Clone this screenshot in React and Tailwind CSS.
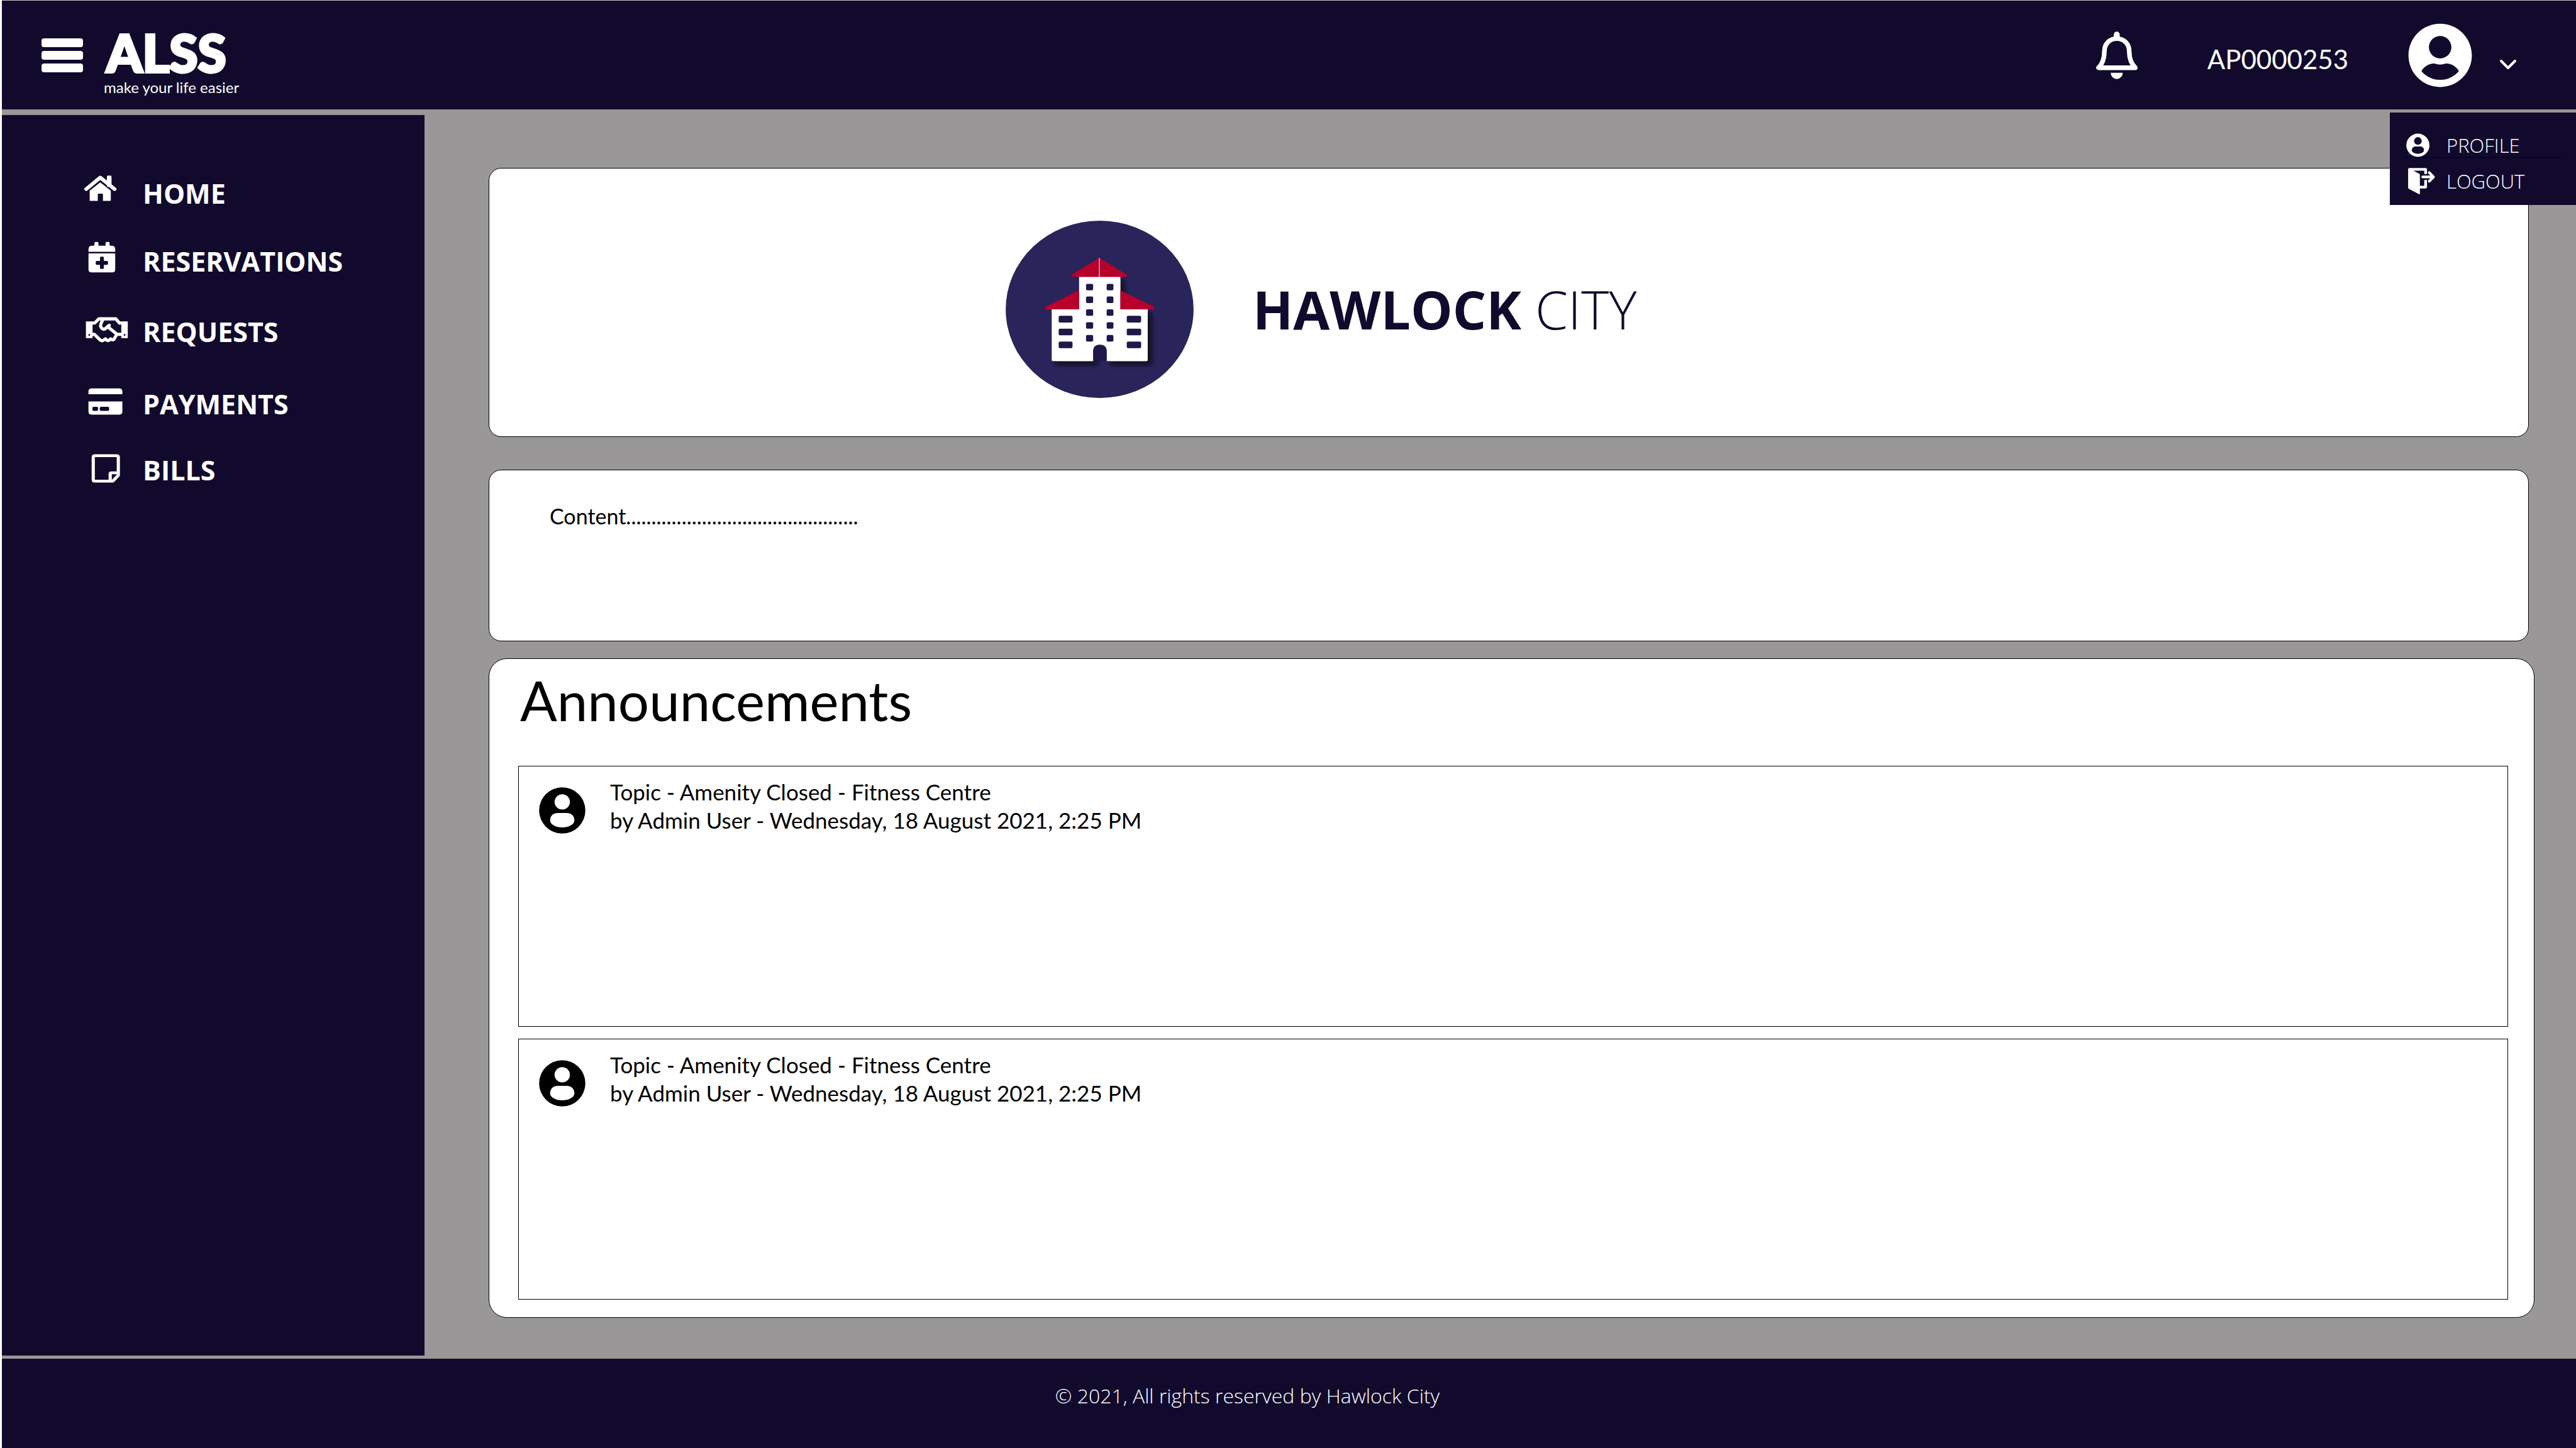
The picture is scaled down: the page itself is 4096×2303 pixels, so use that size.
import React from "react";
import { FaUserCircle } from "react-icons/fa";

const NAVY = "#110a2d";

function HomeIcon() {
  return (
    <svg className="h-16 w-[93px] shrink-0" viewBox="160 84 238 184" preserveAspectRatio="none" fill="#fff" aria-hidden="true">
      <rect x="252" y="99" width="19" height="52" rx="5" />
      <path d="M168 161 L225 108 L283 161" fill="none" stroke="#fff" strokeWidth="16" strokeLinecap="round" strokeLinejoin="round" />
      <path d="M182 168 L225 130 L268 168 V212 q0 3 -3 3 H236 V186 q0 -4 -4 -4 H219 q-4 0 -4 4 V215 H185 q-3 0 -3 -3Z" />
    </svg>
  );
}

function CalendarIcon() {
  return (
    <svg className="h-16 w-[93px] shrink-0" viewBox="160 394 238 184" preserveAspectRatio="none" fill="#fff" aria-hidden="true">
      <g transform="translate(147.6 371.3) scale(.615 .6877)">
        <rect x="87" y="45" width="27" height="40" rx="9" />
        <rect x="161" y="45" width="27" height="40" rx="9" />
        <path d="M48 110 V94 Q48 70 72 70 H201 Q225 70 225 94 V110Z" />
        <path d="M48 127 Q48 121 54 121 H219 Q225 121 225 127 V227 Q225 247 205 247 H68 Q48 247 48 227Z" />
        <rect x="96" y="171" width="81" height="26" rx="7" fill={NAVY} />
        <rect x="124" y="143" width="26" height="81" rx="7" fill={NAVY} />
      </g>
    </svg>
  );
}

function HandshakeIcon() {
  return (
    <svg className="h-16 w-[93px] shrink-0" viewBox="160 718 238 184" preserveAspectRatio="none" fill="#fff" aria-hidden="true">
      <g transform="translate(147.6 371.3) scale(.615 .6877)">
        <rect x="31" y="576" width="44" height="111" />
        <rect x="265" y="576" width="43" height="111" />
        <g fill="none" stroke="#fff" strokeWidth="21" strokeLinejoin="round">
          <path d="M70 587 H89 L117 559 H229 L253 587 H270" />
          <path d="M70 662 H87 L126 700 Q138 709 150 699 L161 692 L170 701 Q178 706 187 699 L195 692 Q214 706 220 688 L236 662 H270" />
          <path d="M143 564 L132 588 C123 608 133 627 150 628 C162 628 168 614 186 602" strokeLinecap="round" />
          <path d="M178 614 L236 661" />
        </g>
        <circle cx="53" cy="666" r="6" fill={NAVY} />
        <circle cx="287" cy="666" r="6" fill={NAVY} />
      </g>
    </svg>
  );
}

function CardIcon() {
  return (
    <svg className="h-16 w-[93px] shrink-0" viewBox="160 1048 238 184" preserveAspectRatio="none" fill="#fff" aria-hidden="true">
      <path d="M177 1100 V1087 Q177 1073 190 1073 H302 Q315 1073 315 1087 V1100Z" />
      <path d="M177 1133 H315 V1179 Q315 1193 302 1193 H190 Q177 1193 177 1179Z" />
      <rect x="193" y="1157" width="23" height="19" rx="5" fill={NAVY} />
      <rect x="223" y="1157" width="38" height="19" rx="5" fill={NAVY} />
    </svg>
  );
}

function NoteIcon() {
  return (
    <svg className="h-16 w-[93px] shrink-0" viewBox="160 1349 238 184" preserveAspectRatio="none" fill="none" stroke="#fff" strokeWidth="13" strokeLinejoin="round" aria-hidden="true">
      <path d="M203 1380 H292 Q298.5 1380 298.5 1388 V1470 L276 1496.5 H203 Q196.5 1496.5 196.5 1489 V1388 Q196.5 1380 203 1380Z" />
      <path d="M265.500 1494 V1464 Q265.500 1458.500 271 1458.500 H297" />
    </svg>
  );
}

function BellIcon() {
  return (
    <svg className="h-[76px] w-[66px]" viewBox="63 66 276 315" fill="#fff" aria-hidden="true">
      <path d="M180 110 V86 a20 20 0 0 1 40 0 V110Z" />
      <path
        d="M200 112 C152 112 118 148 118 195 C118 250 100 285 79 306 H323 C302 285 283 250 283 195 C283 148 248 112 200 112Z"
        fill="none"
        stroke="#fff"
        strokeWidth="31"
        strokeLinejoin="round"
      />
      <path d="M160 340 H240 A40 41 0 0 1 160 340Z" />
    </svg>
  );
}

function UserBadge({ disc, figure }) {
  return (
    <>
      <circle cx="190.500" cy="234.500" r="77" fill={disc} />
      <circle cx="190.500" cy="206" r="25.500" fill={figure} />
      <path
        d="M176 243 H205 C222 243 231 254 231 268 C231 281 212 291 190.500 291 C169 291 150 281 150 268 C150 254 159 243 176 243Z"
        fill={figure}
      />
    </>
  );
}

function LogoutIcon() {
  return (
    <svg className="h-[42px] w-[65px] shrink-0" viewBox="109 393 271 174" fill="#fff" aria-hidden="true">
      <g fill="none" stroke="#fff" strokeWidth="18" strokeLinejoin="round">
        <path d="M135 402 H242 V433" />
        <path d="M242 473 V520 H200" />
        <path d="M223 452.500 H290" strokeLinecap="round" />
        <path d="M266 424 L294 452.500 L266 481" strokeLinecap="round" />
      </g>
      <path d="M126 402 Q126 394 134 394 L163 412 L198 430 Q204 433 204 440 V567 L198 566 L130 531 Q126 529 126 524Z" />
    </svg>
  );
}

function CityLogo() {
  return (
    <svg className="h-[282px] w-[299px] shrink-0" viewBox="188 145 1085 1174" preserveAspectRatio="none" role="img" aria-label="Hawlock City logo">
      <defs>
        <filter id="building-shadow" x="-20%" y="-20%" width="140%" height="140%">
          <feDropShadow dx="22" dy="26" stdDeviation="13" floodColor="#0b0a18" floodOpacity="0.95" />
        </filter>
      </defs>
      <ellipse cx="730.500" cy="732" rx="542" ry="587" fill="#292459" />
      <g filter="url(#building-shadow)">
        <path d="M612 516 H850 V732 H1008 V1068 Q1008 1074 1002 1074 H771 V1010 Q771 966 732 966 Q693 966 693 1010 V1074 H460 Q454 1074 454 1068 V732 H612Z" fill="#fff" />
      </g>
      <path d="M693 1072 V1010 Q693 966 732 966 Q771 966 771 1010 V1072Z" fill="#211849" />
      <g fill="#b8002c">
        <path d="M725 394 V518 H576 Q570 518 569 510 Q568 503 576 498Z" />
        <path d="M733 394 V518 H882 Q888 518 889 510 Q890 503 882 498Z" />
        <path d="M612 606 V732 H422 Q416 732 415 724 Q414 716 422 712Z" />
        <path d="M850 606 V732 H1040 Q1045 732 1046 724 Q1047 716 1040 712Z" />
      </g>
      <path d="M729 392 V518" stroke="#dc8096" strokeWidth="7" />
      <g fill="#211849">
        {[563, 647, 732, 817, 902].map((y) => (
          <React.Fragment key={y}>
            <rect x="652" y={y} width="41" height="43" rx="8" />
            <rect x="771" y={y} width="39" height="43" rx="8" />
          </React.Fragment>
        ))}
        {[775, 860, 945].map((y) => (
          <React.Fragment key={y}>
            <rect x="494" y={y} width="80" height="44" rx="8" />
            <rect x="887" y={y} width="83" height="44" rx="8" />
          </React.Fragment>
        ))}
      </g>
    </svg>
  );
}

const NAV = [
  { label: "HOME", Icon: HomeIcon, space: "" },
  { label: "RESERVATIONS", Icon: CalendarIcon, space: "mt-11" },
  { label: "REQUESTS", Icon: HandshakeIcon, space: "mt-12" },
  { label: "PAYMENTS", Icon: CardIcon, space: "mt-[51px]" },
  { label: "BILLS", Icon: NoteIcon, space: "mt-[41px]" },
];

const ANNOUNCEMENTS = [
  { id: 1, topic: "Topic - Amenity Closed - Fitness Centre", by: "by Admin User - Wednesday, 18 August 2021, 2:25 PM" },
  { id: 2, topic: "Topic - Amenity Closed - Fitness Centre", by: "by Admin User - Wednesday, 18 August 2021, 2:25 PM" },
];

function Header() {
  return (
    <header className="relative flex h-[174px] items-center justify-between border-t border-[#c4c4c4] bg-[#110a2d] pr-[94px] pl-[63px] text-white">
      <div className="flex items-center gap-[33px]">
        <button type="button" aria-label="Toggle menu" className="flex w-[66px] flex-col gap-[6px]">
          <span className="h-[14px] rounded-[4px] bg-white" />
          <span className="h-[14px] rounded-[4px] bg-white" />
          <span className="h-[14px] rounded-[4px] bg-white" />
        </button>
        <a href="#home" className="block pt-7">
          <span className="mb-[6px] block pl-1 text-[82px] leading-[68px] font-black [-webkit-text-stroke:4px_white]">ALSS</span>
          <span className="block text-[24px] leading-8">make your life easier</span>
        </a>
      </div>
      <div className="flex items-center">
        <button type="button" aria-label="Notifications">
          <BellIcon />
        </button>
        <span className="ml-[111px] pt-3 text-[42px] leading-[50px]">AP0000253</span>
        <button type="button" aria-label="Account menu" aria-expanded="true" className="ml-[94px] flex items-center gap-[42px]">
          <FaUserCircle size={104} aria-hidden="true" />
          <svg className="h-12 w-7" viewBox="0 0 28 48" fill="none" stroke="#fff" strokeWidth="4" strokeLinecap="round" strokeLinejoin="round" aria-hidden="true">
            <path d="M3 33 L14 44 L25 33" />
          </svg>
        </button>
      </div>
      <nav aria-label="Account" className="absolute top-[178px] right-0 z-10 w-[296px] bg-[#110a2d] pt-8 pr-[23px] pb-[17px] pl-[25px] font-['Open_Sans',sans-serif] text-[31px] leading-10 font-light">
        <a href="#profile" className="flex h-10 items-center border-b border-black">
          <svg className="h-[38px] w-[65px] shrink-0" viewBox="109 155 271 159" aria-hidden="true">
            <UserBadge disc="#fff" figure={NAVY} />
          </svg>
          PROFILE
        </a>
        <a href="#logout" className="mt-4 flex h-[42px] items-center">
          <LogoutIcon />
          LOGOUT
        </a>
      </nav>
    </header>
  );
}

function Sidebar() {
  return (
    <aside className="mt-[9px] mb-[5px] w-[672px] shrink-0 bg-[#110a2d] pt-[91px] pl-[131px] text-white">
      <nav aria-label="Main" className="flex flex-col">
        {NAV.map(({ label, Icon, space }) => (
          <a key={label} href={"#" + label.toLowerCase()} className={"flex h-16 items-center font-['Open_Sans',sans-serif] text-[43px] font-bold " + space}>
            <Icon />
            <span className="pt-1">{label}</span>
          </a>
        ))}
      </nav>
    </aside>
  );
}

export default function App() {
  return (
    <div className="flex min-h-screen flex-col border-l-[3px] border-white bg-[#999797] font-['Lato',sans-serif] text-black">
      <Header />
      <div className="flex flex-1">
        <Sidebar />
        <main className="min-w-0 flex-1 pt-[93px] pr-[66px] pb-[65px] pl-[102px]">
          <section className="mr-[9px] flex h-[428px] items-center gap-[94px] rounded-[20px] border border-black bg-white pt-[22px] pl-[821px]">
            <CityLogo />
            <h1 className="font-['Open_Sans',sans-serif] text-[84px] leading-[100px] font-bold text-[#110a2d]">
              HAWLOCK <span className="font-light">CITY</span>
            </h1>
          </section>
          <section className="mt-[52px] mr-[9px] h-[273px] rounded-[20px] border border-black bg-white pt-[51px] pl-24">
            <p className="text-[34px] leading-[44px]">Content..............................................</p>
          </section>
          <section className="mt-[27px] rounded-[29px] border border-black bg-white pt-[18px] pr-[41px] pb-7 pl-[46px]">
            <h2 className="pl-[3px] text-[87px] leading-[96px]">Announcements</h2>
            <div className="mt-14 flex flex-col gap-[19px]">
              {ANNOUNCEMENTS.map((item) => (
                <article key={item.id} className="flex h-[415px] gap-[39px] border border-black pt-[18px] pl-8">
                  <svg className="mt-[15px] h-[74px] w-[74px] shrink-0" viewBox="113 157 155 155" aria-hidden="true">
                    <UserBadge disc="#000" figure="#fff" />
                  </svg>
                  <div className="text-[35px] leading-[45px]">
                    <h3>{item.topic}</h3>
                    <p>{item.by}</p>
                  </div>
                </article>
              ))}
            </div>
          </section>
        </main>
      </div>
      <footer className="flex h-[142px] items-center justify-center bg-[#110a2d] pr-[132px] pb-6 font-['Open_Sans',sans-serif] text-[32px] font-light text-white">
        <p>© 2021, All rights reserved by Hawlock City</p>
      </footer>
    </div>
  );
}
